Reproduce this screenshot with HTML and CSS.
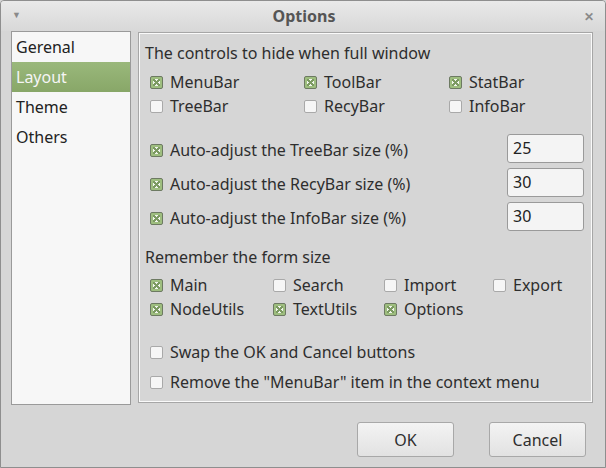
FILE: index.html
```html
<!DOCTYPE html>
<html>
<head>
<meta charset="utf-8">
<link rel="stylesheet" href="styles.css">
</head>
<body>
<div class="window">
  <div class="titlebar">
    <span class="tb-menu">&#9660;</span>
    <span class="tb-title">Options</span>
    <span class="tb-close">&#10005;</span>
  </div>
  <div class="main">
    <ul class="nav">
      <li>Gerenal</li>
      <li class="sel">Layout</li>
      <li>Theme</li>
      <li>Others</li>
    </ul>
    <div class="panel">
      <div class="heading">The controls to hide when full window</div>
      <div class="grid3">
        <label class="chk"><span class="cb on"></span>MenuBar</label>
        <label class="chk"><span class="cb on"></span>ToolBar</label>
        <label class="chk"><span class="cb on"></span>StatBar</label>
        <label class="chk"><span class="cb"></span>TreeBar</label>
        <label class="chk"><span class="cb"></span>RecyBar</label>
        <label class="chk"><span class="cb"></span>InfoBar</label>
      </div>
      <div class="sizes">
        <div class="size-row"><label class="chk"><span class="cb on"></span>Auto-adjust the TreeBar size (%)</label><div class="input">25</div></div>
        <div class="size-row"><label class="chk"><span class="cb on"></span>Auto-adjust the RecyBar size (%)</label><div class="input">30</div></div>
        <div class="size-row"><label class="chk"><span class="cb on"></span>Auto-adjust the InfoBar size (%)</label><div class="input">30</div></div>
      </div>
      <div class="heading heading2">Remember the form size</div>
      <div class="grid4">
        <label class="chk"><span class="cb on"></span>Main</label>
        <label class="chk"><span class="cb"></span>Search</label>
        <label class="chk"><span class="cb"></span>Import</label>
        <label class="chk"><span class="cb"></span>Export</label>
        <label class="chk"><span class="cb on"></span>NodeUtils</label>
        <label class="chk"><span class="cb on"></span>TextUtils</label>
        <label class="chk"><span class="cb on"></span>Options</label>
      </div>
      <div class="extras">
        <label class="chk tall"><span class="cb"></span>Swap the OK and Cancel buttons</label>
        <label class="chk tall"><span class="cb"></span>Remove the "MenuBar" item in the context menu</label>
      </div>
    </div>
  </div>
  <div class="buttons">
    <button class="btn">OK</button>
    <button class="btn">Cancel</button>
  </div>
</div>
</body>
</html>
```

FILE: styles.css
```css
html, body {
  margin: 0;
  padding: 0;
  background: #d6d6d6;
}
body {
  font-family: "Noto Sans", "Open Sans", sans-serif;
  font-size: 16px;
  color: #2e2e2e;
}
.window {
  width: 606px;
  height: 468px;
  box-sizing: border-box;
  border: 1px solid #8e8e8e;
  border-radius: 4px 4px 0 0;
  background: #d6d6d6;
  display: flex;
  flex-direction: column;
  overflow: hidden;
}
.titlebar {
  height: 30px;
  flex: none;
  display: flex;
  align-items: center;
  justify-content: space-between;
  padding: 0 9px 0 11px;
  background: linear-gradient(#e9e9e9, #d8d8d8);
  color: #8a8a8a;
}
.tb-menu {
  font-size: 9px;
  width: 14px;
  margin-top: -3px;
}
.tb-title {
  font-weight: bold;
  color: #555;
  font-size: 16px;
  margin-top: -1px;
}
.tb-close {
  font-size: 12px;
  font-weight: bold;
  width: 14px;
  text-align: center;
}
.main {
  display: flex;
  gap: 7px;
  padding: 0 12px 0 10px;
}
.nav {
  list-style: none;
  margin: 0;
  padding: 0;
  width: 120px;
  height: 374px;
  box-sizing: border-box;
  border: 1px solid #9a9a9a;
  background: #f7f7f7;
}
.nav li {
  height: 30px;
  line-height: 30px;
  padding-left: 4px;
  color: #222;
}
.nav li.sel {
  background: linear-gradient(#9ab87b, #88a768);
  color: #f5f5f5;
}
.panel {
  flex: 1;
  margin-top: 1px;
  height: 371px;
  box-sizing: border-box;
  border: 1px solid #a6a6a6;
  box-shadow: inset 0 0 0 1px #fafafa;
  padding: 10px 8px 0 6px;
}
.heading {
  line-height: 20px;
  height: 20px;
}
.grid3 {
  display: grid;
  grid-template-columns: 154px 145px auto;
  margin-top: 7px;
  padding-left: 5px;
}
.grid4 {
  display: grid;
  grid-template-columns: 123px 111px 109px auto;
  margin-top: 6px;
  padding-left: 5px;
}
.chk {
  display: flex;
  align-items: center;
  height: 24px;
  white-space: nowrap;
}
.chk.tall {
  height: 30px;
}
.cb {
  width: 13px;
  height: 13px;
  box-sizing: border-box;
  border: 1px solid #a9a9a9;
  border-radius: 2px;
  background: #f6f6f6;
  margin-right: 7px;
  flex: none;
  display: flex;
  align-items: center;
  justify-content: center;
  margin-top: 1px;
}
.cb.on {
  border-color: #6d7a62;
  background: #9ebe7f;
}
.cb.on::after {
  content: "";
  width: 7px;
  height: 7px;
  background:
    linear-gradient(45deg, transparent 38%, #7c9a62 38%, #7c9a62 62%, transparent 62%),
    linear-gradient(-45deg, transparent 38%, #7c9a62 38%, #7c9a62 62%, transparent 62%),
    #f2f6ee;
}
.sizes {
  margin-top: 16px;
  display: flex;
  flex-direction: column;
  gap: 5px;
  padding-left: 5px;
}
.size-row {
  display: flex;
  align-items: center;
  justify-content: space-between;
  height: 29px;
}
.size-row .chk {
  margin-top: 2px;
}
.input {
  width: 77px;
  height: 29px;
  box-sizing: border-box;
  border: 1px solid #9a9a9a;
  border-radius: 3px;
  background: #f4f4f4;
  padding-left: 5px;
  line-height: 27px;
  color: #222;
}
.heading2 {
  margin-top: 16px;
}
.extras {
  margin-top: 16px;
  padding-left: 5px;
}
.buttons {
  display: flex;
  justify-content: flex-end;
  gap: 35px;
  padding: 17px 19px 0 0;
}
.btn {
  width: 97px;
  height: 35px;
  font-family: inherit;
  font-size: 16px;
  color: #2e2e2e;
  border: 1px solid #a8a8a8;
  border-radius: 3px;
  background: linear-gradient(#f3f3f3, #e2e2e2);
  padding: 0;
}
```
